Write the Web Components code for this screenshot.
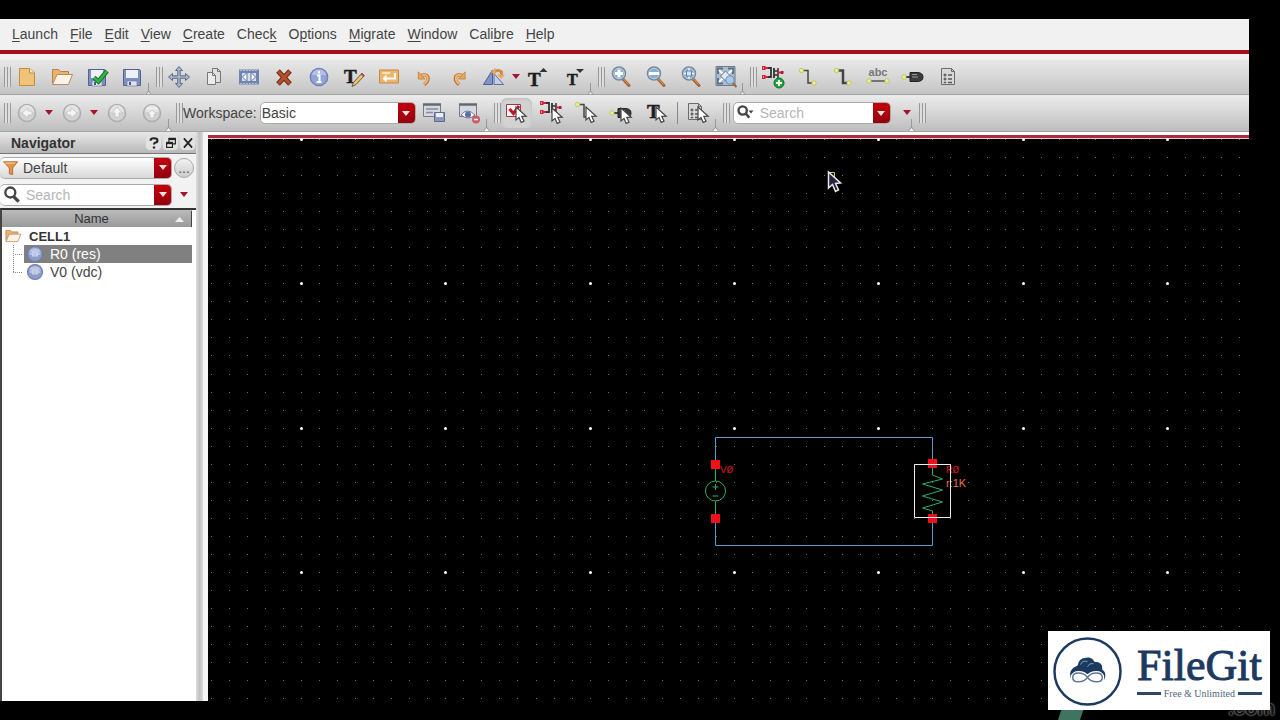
<!DOCTYPE html>
<html lang="en">
<head>
<meta charset="utf-8">
<title>Schematic Editor</title>
<style>
  html, body { margin: 0; background: #000; }
  body { font-family: "Liberation Sans", Arial, sans-serif; font-size: 14px; line-height: 18px; color: #333; }
</style>
</head>
<body>
<eda-app></eda-app>

<script>
// ---------- icon library (24 x 24 grid) ----------
const floppy = '<path d="M3.500 4.500h16l1 1v15h-17z" fill="#7e8fc4" stroke="#53618f"/><path d="M6 5h12v8H6z" fill="#eef1fa"/><path d="M7 16h10v5H7z" fill="#dfe2ec" stroke="#6672a0" stroke-width=".6"/><path d="M9 17h2v3H9z" fill="#4b5889"/>';
const cursor = '<path d="M0 0v13l3-2.600 2.200 5 2.800-1.200-2.200-4.800 4.400-.2z" fill="#fff" stroke="#444" stroke-width="1.200"/>';
const lens = '<path d="M14 14l6 6.500" stroke="#a9602c" stroke-width="3" stroke-linecap="round"/><path d="M14.500 14l5 5.500" stroke="#e0a060" stroke-width="1"/><circle cx="10" cy="8.500" r="6.500" fill="#86aed2" stroke="#7b8794" stroke-width="1.500"/><circle cx="10" cy="8.500" r="5.300" fill="none" stroke="#c6dcee" stroke-width=".8"/>';
const page = '<path d="M5.500 3.500h10l3 3v13h-13z" fill="#d8d8d8" stroke="#6b6b6b"/><path d="M15.500 3.500v3h3" fill="none" stroke="#6b6b6b"/><path d="M8 9h2v2H8zM8 13h2v2H8zM8 17h2v1H8z" stroke="#555" fill="#777" stroke-width=".6"/><path d="M12 10h4M12 14h4M12 17.500h4" stroke="#555" stroke-width="1.500"/>';
const folder = '<path d="M2.500 18V4.500h6l2 2h8V10" fill="#e9b271" stroke="#b9803f"/><path d="M2.500 19.500L7 9.500h15.500l-4 10z" fill="#f8f2e8" stroke="#b98a5a"/>';
const dot = (x, y) => `<circle cx="${x}" cy="${y}" r="2.200" fill="#eff08a" stroke="#b9bb55" stroke-width=".8"/>`;
const gate = '<path d="M3 12h7" stroke="#444" stroke-width="2"/>' + dot(3, 12) + '<path d="M9 7.500h7q6 0 6 4.500t-6 4.500H9z" fill="#3c3c3c" stroke="#222"/><path d="M11 12h6M11 9.500h5" stroke="#999" stroke-width="1.200"/>';
const mos = '<path d="M2 3h6M2 12h5" stroke="#cf2338" stroke-width="2"/><path d="M1 1h3.500v4H1zM1 10h3.500v4H1z" fill="#cf2338"/><path d="M2.500 2.500v1M2.500 11.500v1" stroke="#fff"/><path d="M7 3h3M7 12h3M10 2v11M13 3v10" fill="none" stroke="#333" stroke-width="1.800"/><path d="M13 6h4M13 10h4M17 3v10" stroke="#333" stroke-width="1.500"/><path d="M17 7.500h5" stroke="#cf2338" stroke-width="2"/><path d="M20 6h2.500v3H20z" fill="#b0182c"/>';
const round = '<circle cx="12" cy="12" r="8.500" fill="#d3d3d3" stroke="#acacac" stroke-width="1.500"/><path d="M5 11a7 7 0 0 1 14 0z" fill="#e4e4e4"/>';
const wire = c => `<path d="M6 5.500h6V18h6" fill="none" stroke="#444" stroke-width="${c}"/>` + dot(5.5, 5.5) + dot(18, 18);
const bigT = (x, y, s) => `<text x="${x}" y="${y}" font-family="Liberation Serif, serif" font-weight="700" font-size="${s}" fill="#1c1c1c" stroke="#1c1c1c" stroke-width=".5">T</text>`;

const ICONS = {
  new: '<path d="M4.500 3.500h10l5 4v13h-15z" fill="#f0c477" stroke="#bd8d48"/><path d="M14.500 3.500v4.500h5" fill="#fbe6bd" stroke="#bd8d48"/>',
  open: folder,
  checksave: floppy + '<path d="M9 12.500l4.500 4L22 6" fill="none" stroke="#16752a" stroke-width="4.500"/><path d="M9 12.500l4.500 4L22 6" fill="none" stroke="#35b449" stroke-width="2.500"/>',
  save: floppy,
  move: '<path d="M12 1.500l3.500 4h-2.300v5.300h5.300V8.500l4 3.500-4 3.500v-2.300h-5.300v5.300h2.300l-3.500 4-3.500-4h2.300v-5.300H5.500v2.300l-4-3.500 4-3.500v2.300h5.300V5.500H8.500z" fill="#a9b7cc" stroke="#5d6b83" stroke-width="1"/>',
  copy: '<path d="M10.500 3.500h5l3 3v11h-8z" fill="#e0e0e0" stroke="#777"/><path d="M5.500 7.500h5l3 3v9h-8z" fill="#ececec" stroke="#777"/><path d="M10.500 7.500v3h3M15.500 3.500v3h3" fill="none" stroke="#777"/>',
  stretch: '<path d="M2 4.500h20v15H2z" fill="#7184af"/><path d="M3 5.500h18M3 18.500h18" stroke="#aebbdb" stroke-dasharray="2 1"/><path d="M5 8h14v8H5z" fill="#d5ddf0"/><path d="M10 7.500v9L5.500 12zM14 7.500v9l4.500-4.500z" fill="#fff" stroke="#6073a3"/>',
  delete: '<path d="M6 6l12 13M18 6L6 19" stroke="#6f2c18" stroke-width="5"/><path d="M6.500 6.500l11 12M17.500 6.500l-11 12" stroke="#b3512f" stroke-width="3"/>',
  info: '<circle cx="12" cy="12" r="8.700" fill="#94a3d6" stroke="#6f7fb8" stroke-width="1.300"/><path d="M5 10a7.200 7.200 0 0 1 14 0z" fill="#b4bfe6"/><path d="M12 6v2.500M10 10.500h2.500V17M9.500 17h5" fill="none" stroke="#fff" stroke-width="2"/>',
  edittext: bigT(2, 18, 19) + '<path d="M10 21.500l1.500-4L20 8l2.500 2.500-8.500 9z" fill="#efc36e" stroke="#6f5a3a"/><path d="M18.500 9.500L20 8l2.500 2.500-1.500 1.500z" fill="#c05070"/>',
  repeat: '<path d="M2.500 5h19v13h-19z" fill="#f0b56c" stroke="#c68844"/><path d="M18 8v5.500H8" fill="none" stroke="#fff" stroke-width="2"/><path d="M9.500 9.500v8l-4-4z" fill="#fff"/><path d="M5 8h8" stroke="#fbe2bf" stroke-width="2"/>',
  undo: '<g transform="translate(2 3) scale(.85)"><path d="M6.500 9.500q10-4 10 3 0 3.500-4.500 7" fill="none" stroke="#bd7434" stroke-width="4"/><path d="M7 9.500q9-3.500 9 3 0 3-4 6.500" fill="none" stroke="#f2b873" stroke-width="2.200"/><path d="M5 4.500v8.500h8z" fill="#eaa75d" stroke="#bd7434" stroke-width=".8"/></g>',
  redo: '<g transform="translate(2 3) scale(.85)"><path d="M17.500 9.500q-10-4-10 3 0 3.500 4.500 7" fill="none" stroke="#bd7434" stroke-width="4"/><path d="M17 9.500q-9-3.500-9 3 0 3 4 6.500" fill="none" stroke="#f2b873" stroke-width="2.200"/><path d="M19 4.500v8.500h-8z" fill="#eaa75d" stroke="#bd7434" stroke-width=".8"/></g>',
  rotate: '<path d="M1.500 19.500L10.500 5v14.500z" fill="#8195c7" stroke="#4e6092"/><path d="M12 19.500V8.500l9.500 11z" fill="#c3cfea" stroke="#5d6f9f"/><path d="M12 7q4-3 7.500 0v4" fill="none" stroke="#d18a43" stroke-width="3"/><path d="M15 9.500h8l-4 4.500z" fill="#e9a65c"/><path d="M9 7l4.500-4.500v8z" fill="#e9a65c"/>',
  textup: bigT(1, 21, 19) + '<path d="M12.500 7l4-4 4 4z" fill="#333"/>',
  textdown: bigT(5, 20, 16) + '<path d="M14 4h8l-4 4z" fill="#333"/>',
  zoomin: lens + '<path d="M10 4.500v8M6 8.500h8" stroke="#fff" stroke-width="3"/>',
  zoomout: lens + '<path d="M5 8.500h10" stroke="#fff" stroke-width="3"/>',
  zoomsel: lens + '<path d="M10 3.500v10M5 8.500h10" stroke="#fff" stroke-width="1.500"/><path d="M7.500 6h5v5h-5z" fill="#d7e6f5" stroke="#5c86b8"/>',
  zoomfit: '<path d="M2 1.500h19v19H2z" fill="#aebccb" stroke="#6b7a8d"/><path d="M4 9V3.500h5M14 3.500h5V9M4 13v5.500h5" fill="none" stroke="#5c6f88" stroke-width="2"/><path d="M5 5l4 4M18 5l-4 4M5 17l4-4" stroke="#fff" stroke-width="2"/><path d="M11.500 6l5 5-5 5-5-5z" fill="#dde7f2" stroke="#5d7694"/><path d="M17.500 17l5 5" stroke="#a9602c" stroke-width="2"/><circle cx="16" cy="15" r="4.200" fill="#a9c9e8" stroke="#6d8aa8"/>',
  instance: mos + '<circle cx="18" cy="18" r="5" fill="#22a53c" stroke="#11702a"/><path d="M18 15v6M15 18h6" stroke="#fff" stroke-width="1.800"/>',
  wire: wire(1.5),
  widewire: wire(2.5),
  label: '<text x="12" y="11" text-anchor="middle" font-family="Liberation Sans, sans-serif" font-size="11" font-weight="700" fill="#777">abc</text><path d="M3 16h18" stroke="#555" stroke-width="1.500"/>' + dot(3, 16) + dot(21, 16),
  pin: gate,
  sheet: page,
  left: round + '<path d="M13 7v3h4v4h-4v3l-6-5z" fill="#f4f4f4" stroke="#bdbdbd" stroke-width=".7"/>',
  right: round + '<path d="M11 7v3H7v4h4v3l6-5z" fill="#f4f4f4" stroke="#bdbdbd" stroke-width=".7"/>',
  up: round + '<path d="M7 12h3v4h4v-4h3l-5-6z" fill="#f4f4f4" stroke="#bdbdbd" stroke-width=".7"/>',
  top: round + '<path d="M6.500 13h3.500v4h4v-4h3.500L12 9z" fill="#f4f4f4" stroke="#bdbdbd" stroke-width=".7"/><path d="M7 7.500h10" stroke="#f4f4f4" stroke-width="1.500"/>',
  savews: '<path d="M1.500 3.500h17v12h-17z" fill="#d6d9de" stroke="#757b85"/><path d="M1 3.500h18" stroke="#626975" stroke-width="2.500"/><path d="M4 8h12M4 11.500h7" stroke="#878d98" stroke-width="1.500"/><path d="M12.500 11.500h10v9h-10z" fill="#8b99bd" stroke="#5e6a8e"/><path d="M14 12h7v4h-7z" fill="#eef1f8"/>',
  hidews: '<path d="M2.500 3.500h17v12h-17z" fill="#d6d9de" stroke="#757b85"/><path d="M2 3.500h18" stroke="#626975" stroke-width="2.500"/><path d="M4 14q6-8 14 0-7 6-14 0z" fill="#fff" stroke="#6a79a1"/><circle cx="11" cy="13.500" r="3" fill="#5a6fa8"/><circle cx="19" cy="18.500" r="4" fill="#d05a66"/><path d="M17 18.500h4" stroke="#fff" stroke-width="1.500"/>',
  selall: '<path d="M2.500 3.500h14v12h-14z" fill="#fff" stroke="#b03040"/><path d="M5.500 8l4 4.500L15 5" fill="none" stroke="#cc1024" stroke-width="3"/><g transform="translate(12 6)">' + cursor + '</g>',
  selinst: '<g transform="translate(0 -1)">' + mos + '</g><g transform="translate(13 7)">' + cursor + '</g>',
  selwire: '<g transform="translate(-2 -2)">' + wire(1.5) + '</g><g transform="translate(12 6)">' + cursor + '</g>',
  selpin: gate + '<g transform="translate(12 7)">' + cursor + '</g>',
  seltext: bigT(3, 17, 19) + '<g transform="translate(12 6)">' + cursor + '</g>',
  selsheet: '<g transform="translate(-3 -1)">' + page + '</g><g transform="translate(12 6)">' + cursor + '</g>',
  search: '<path d="M14 14l6 6" stroke="#444" stroke-width="4"/><circle cx="10" cy="9" r="6" fill="#fff" stroke="#444" stroke-width="2.800"/>',
  searchmenu: '<path d="M11 12l5 5.500" stroke="#444" stroke-width="3"/><circle cx="8" cy="9" r="5" fill="#fff" stroke="#444" stroke-width="2.800"/><path d="M15 9h6l-3 3.500z" fill="#444"/>',
  filter: '<path d="M3 4.500h17l-6 7.500v8l-4-1v-7z" fill="#e39249" stroke="#a9652d"/><path d="M5 6h12" stroke="#f6c590" stroke-width="1.500"/>',
  folder: folder,
  instnode: '<circle cx="12" cy="12" r="10" fill="#8d9cc9" stroke="#6d7cab" stroke-width="1.500"/><path d="M4 10a8.500 8.500 0 0 1 16 0z" fill="#bcc6e4"/><path d="M5 12h14M9 9.500h6v5H9z" fill="none" stroke="#ccd4ec" stroke-width="1.800"/>',
  help: '<path d="M6 8q0-4 6-4t6 4q0 2.500-4 3.500-2 1-2 3" fill="none" stroke="#222" stroke-width="3.500"/><path d="M10 18h4v3.500h-4z" fill="#222"/>',
  float: '<path d="M8.500 4.500h11v9h-11z" fill="none" stroke="#222" stroke-width="2"/><path d="M8 5h12" stroke="#222" stroke-width="4"/><path d="M4.500 11.500h10v8h-10z" fill="#eee" stroke="#222" stroke-width="2"/><path d="M4 12h11" stroke="#222" stroke-width="4"/>',
  close: '<path d="M5 4l14 16M19 4L5 20" stroke="#222" stroke-width="3"/>'
};

const define = (name, html, setup) => {
  const template = document.createElement('template');
  template.innerHTML = html;
  customElements.define(name, class extends HTMLElement {
    connectedCallback() {
      if (this.shadowRoot) return;
      const root = this.attachShadow({ mode: 'open' });
      root.append(template.content.cloneNode(true));
      if (setup) setup(this, root);
    }
  });
};

// ---------- small parts ----------
define('eda-icon', `
<style>
  :host { display: block; width: 24px; height: 24px; flex: none; }
  svg { display: block; width: 100%; height: 100%; overflow: visible; }
</style><svg viewBox="0 0 24 24" fill="none" aria-hidden="true"></svg>`,
(host, root) => { root.querySelector('svg').innerHTML = ICONS[host.getAttribute('name')] || ''; });

define('tool-button', `
<style>
  :host { display: block; width: 35px; flex: none; }
  button { display: grid; place-items: center; width: 31px; height: 30px; margin: 0 auto; padding: 0; border: 0; border-radius: 6px; background: none; }
  button[aria-pressed="true"] { background: #d2d2d2; box-shadow: inset 0 1px 3px #bbb; }
</style><button type="button"><eda-icon></eda-icon></button>`,
(host, root) => {
  const button = root.querySelector('button');
  button.setAttribute('aria-label', host.getAttribute('label'));
  if (host.hasAttribute('pressed')) button.setAttribute('aria-pressed', 'true');
  const icon = document.createElement('eda-icon');
  icon.setAttribute('name', host.getAttribute('icon'));
  root.querySelector('eda-icon').replaceWith(icon);
});

define('menu-arrow', `
<style>
  :host { display: block; width: 10px; flex: none; }
  button { display: grid; place-items: center; width: 100%; height: 22px; padding: 0; border: 0; background: none; }
  svg { display: block; }
</style><button type="button" aria-label="More"><svg width="8" height="6" viewBox="0 0 8 6"><path d="M0 0h8L4 5z" fill="#a3152c"/></svg></button>`);

define('tool-group', `
<style>
  :host { display: flex; align-items: center; position: relative; flex: none; min-height: 30px; }
  .grip { width: 14px; height: 20px; margin-right: -2px; flex: none;
    background: repeating-linear-gradient(90deg, #999 0 1px, #dedede 1px 3px) right / 7px 100% no-repeat; }
  :host([first]) .grip { width: 11px; }
  .notch { position: absolute; right: -3px; bottom: -3px; }
  :host([last]) .notch { display: none; }
</style><span class="grip"></span><slot></slot><svg class="notch" width="7" height="12" aria-hidden="true"><path d="M3 0h1v8l3 4H0l3-4z" fill="#999"/><path d="M1 12l2.500-3L6 12z" fill="#f4f4f4"/></svg>`);

define('combo-box', `
<style>
  :host { display: flex; height: 22px; min-width: 0; box-sizing: border-box; border: 1px solid #aaa; border-radius: 5px; overflow: hidden;
    background: var(--face, #fff); align-items: center; }
  select, input { flex: 1; min-width: 0; height: 20px; border: 0; padding: 0 0 0 1px; margin: 0; background: none; font: inherit; color: #444; appearance: none; outline: 0; }
  input::placeholder { color: #b5b5b5; opacity: 1; }
  .drop { display: grid; place-items: center; flex: none; width: 17px; height: 100%; padding: 0; border: 0; background: linear-gradient(#c4000c, #930010); pointer-events: none; }
  eda-icon { width: 20px; height: 20px; margin: 0 1px; }
  :host([wide-icon]) eda-icon { margin: 0 3px 0 2px; }
</style><slot></slot><span class="field"></span><span class="drop"><svg width="8" height="5"><path d="M0 0h8L4 5z" fill="#fbe0e0"/></svg></span>`,
(host, root) => {
  const field = document.createElement(host.hasAttribute('search') ? 'input' : 'select');
  field.setAttribute('aria-label', host.getAttribute('label'));
  if (host.hasAttribute('search')) field.placeholder = 'Search';
  else field.append(new Option(host.getAttribute('value')));
  root.querySelector('.field').replaceWith(field);
  const name = host.getAttribute('icon');
  if (name) {
    const icon = document.createElement('eda-icon');
    icon.setAttribute('name', name);
    root.prepend(icon);
  }
});

// ---------- menu bar ----------
define('menu-bar', `
<style>
  :host { display: block; background: #f1f1f1; border-bottom: 4px solid #a80f1d; }
  nav { display: flex; gap: 12px; padding: 6px 12px 7px; }
  a { color: #444; text-decoration: none; }
  u { text-underline-offset: 2px; }
</style>
<nav>
  <a href="#"><u>L</u>aunch</a><a href="#"><u>F</u>ile</a><a href="#"><u>E</u>dit</a><a href="#"><u>V</u>iew</a><a href="#"><u>C</u>reate</a><a href="#">Chec<u>k</u></a><a href="#">O<u>p</u>tions</a><a href="#"><u>M</u>igrate</a><a href="#"><u>W</u>indow</a><a href="#">Cali<u>b</u>re</a><a href="#"><u>H</u>elp</a>
</nav>`);

// ---------- tool bars ----------
define('tool-bars', `
<style>
  :host { display: block; }
  .row { display: flex; align-items: center; height: 36px; overflow: hidden; border-bottom: 1px solid #a2a2a2; background: linear-gradient(#ececec, #dadada 40%, #bebebe); }
  .row.upper { height: 35px; padding-top: 5px; background: linear-gradient(#f5f0f2 5px, #e6e6e6 7px, #dadada 50%, #c4c4c4); }
  label { padding: 0 3px 0 2px; color: #444; }
  .workspace { width: 156px; margin-right: 1px; }
  .find { width: 158px; margin: 0 11px 0 5px; }
  .rule { width: 1px; height: 22px; margin: 0 3px; background: #888; }
</style>
<div class="row upper">
  <tool-group first>
    <tool-button icon="new" label="New"></tool-button><tool-button icon="open" label="Open"></tool-button><tool-button icon="checksave" label="Check and save"></tool-button><tool-button icon="save" label="Save"></tool-button>
  </tool-group>
  <tool-group>
    <tool-button icon="move" label="Move"></tool-button><tool-button icon="copy" label="Copy"></tool-button><tool-button icon="stretch" label="Stretch"></tool-button><tool-button icon="delete" label="Delete"></tool-button><tool-button icon="info" label="Properties"></tool-button><tool-button icon="edittext" label="Edit text"></tool-button><tool-button icon="repeat" label="Repeat"></tool-button><tool-button icon="undo" label="Undo"></tool-button><tool-button icon="redo" label="Redo"></tool-button><tool-button icon="rotate" label="Rotate"></tool-button><menu-arrow></menu-arrow><tool-button icon="textup" label="Larger text"></tool-button><tool-button icon="textdown" label="Smaller text"></tool-button>
  </tool-group>
  <tool-group>
    <tool-button icon="zoomin" label="Zoom in"></tool-button><tool-button icon="zoomout" label="Zoom out"></tool-button><tool-button icon="zoomsel" label="Zoom to selection"></tool-button><tool-button icon="zoomfit" label="Zoom to fit"></tool-button>
  </tool-group>
  <tool-group last>
    <tool-button icon="instance" label="Instance"></tool-button><tool-button icon="wire" label="Wire"></tool-button><tool-button icon="widewire" label="Wide wire"></tool-button><tool-button icon="label" label="Wire name"></tool-button><tool-button icon="pin" label="Pin"></tool-button><tool-button icon="sheet" label="Sheet"></tool-button>
  </tool-group>
</div>
<div class="row">
  <tool-group first>
    <tool-button icon="left" label="Back"></tool-button><menu-arrow></menu-arrow><tool-button icon="right" label="Forward"></tool-button><menu-arrow></menu-arrow><tool-button icon="up" label="Up"></tool-button><tool-button icon="top" label="Top"></tool-button>
  </tool-group>
  <tool-group>
    <label>Workspace:</label><combo-box class="workspace" label="Workspace" value="Basic"></combo-box><tool-button icon="savews" label="Save workspace"></tool-button><tool-button icon="hidews" label="Toggle assistants"></tool-button>
  </tool-group>
  <tool-group>
    <tool-button icon="selall" label="Select all kinds" pressed></tool-button><tool-button icon="selinst" label="Select instances"></tool-button><tool-button icon="selwire" label="Select wires"></tool-button><tool-button icon="selpin" label="Select pins"></tool-button><tool-button icon="seltext" label="Select text"></tool-button><span class="rule"></span><tool-button icon="selsheet" label="Select sheet"></tool-button>
  </tool-group>
  <tool-group>
    <combo-box class="find" search wide-icon icon="searchmenu" label="Search"></combo-box><menu-arrow></menu-arrow>
  </tool-group>
  <tool-group last></tool-group>
</div>`);

// ---------- navigator ----------
define('navigator-panel', `
<style>
  :host { display: flex; flex-direction: column; width: 196px; flex: none; background: #f2f2f2; }
  header { display: flex; align-items: center; height: 21px; gap: 2px; padding: 0 1px 0 11px; border-bottom: 1px solid #777; background: linear-gradient(#e8e8e8, #b8b8b8); }
  h2 { flex: 1; margin: 0; font-size: 14px; line-height: 18px; color: #333; }
  header button { display: grid; place-items: center; width: 15px; height: 15px; padding: 0; border: 0; border-radius: 4px; background: #e2e2e2; }
  header eda-icon { width: 14px; height: 14px; }
  .line { display: flex; align-items: center; height: 27px; }
  .line combo-box { width: 172px; border-left: 0; }
  .filter { --face: linear-gradient(#fff, #d8d8d8); }
  .more { width: 20px; height: 20px; margin-left: 2px; padding: 0; border: 1px solid #aaa; border-radius: 50%; background: linear-gradient(#f2f2f2, #ccc); font: inherit; line-height: 14px; color: #555; }
  .line menu-arrow { margin-left: 7px; }
  .tree { flex: 1; background: #fff; border-top: 2px solid #333; border-left: 2px solid #444; padding-right: 4px; }
  table { width: 100%; border-collapse: collapse; }
  th, td { padding: 0; height: 18px; line-height: 17px; text-align: left; }
  th { height: 17px; line-height: 16px; background: linear-gradient(#bbb, #999); font-weight: 400; font-size: 13px; color: #333; }
  .head { display: flex; align-items: center; justify-content: center; position: relative; padding-right: 10px; border-right: 1px solid #444; }
  .head svg { position: absolute; right: 7px; top: 6px; }
  .cell { display: flex; align-items: center; height: 18px; }
  .cell.root { gap: 7px; font-weight: 700; font-size: 13px; padding-left: 2px; }
  .cell eda-icon { width: 18px; height: 18px; }
  .branch { flex: none; width: 10px; height: 18px; margin-left: 11px; 
    background: repeating-linear-gradient(#888 0 1px, #fff 1px 2px) 0 0 / 1px var(--stem) no-repeat, repeating-linear-gradient(90deg, #888 0 1px, #fff 1px 2px) 0 9px / 100% 1px no-repeat; }
  .item { flex: 1; display: flex; align-items: center; gap: 6px; height: 18px; margin-left: 1px; padding-left: 2px; color: #444; }
  tr[aria-selected="true"] .item { background: #808080; color: #fff; }
</style>
<header><h2>Navigator</h2><button type="button" aria-label="Help"><eda-icon name="help"></eda-icon></button><button type="button" aria-label="Float"><eda-icon name="float"></eda-icon></button><button type="button" aria-label="Close"><eda-icon name="close"></eda-icon></button></header>
<div class="line"><combo-box class="filter" icon="filter" label="Filter" value="Default"></combo-box><button class="more" type="button" aria-label="Edit filter">...</button></div>
<div class="line"><combo-box search wide-icon icon="search" label="Search navigator"></combo-box><menu-arrow></menu-arrow></div>
<div class="tree">
<table>
  <thead><tr><th scope="col"><div class="head">Name<svg width="9" height="5"><path d="M0 5h9L4.500 0z" fill="#eee"/></svg></div></th></tr></thead>
  <tbody>
    <tr><td><div class="cell root"><eda-icon name="folder"></eda-icon>CELL1</div></td></tr>
    <tr aria-selected="true"><td><div class="cell"><span class="branch" style="--stem:18px"></span><div class="item"><eda-icon name="instnode"></eda-icon>R0 (res)</div></div></td></tr>
    <tr><td><div class="cell"><span class="branch" style="--stem:9px"></span><div class="item"><eda-icon name="instnode"></eda-icon>V0 (vdc)</div></div></td></tr>
  </tbody>
</table>
</div>`);

// ---------- schematic canvas ----------
define('schematic-canvas', `
<style>
  :host { display: flex; flex-direction: column; flex: 1; min-width: 0; background: #fff; padding-top: 3px; }
  .sheet { flex: 1; min-height: 0; position: relative; overflow: hidden; background: #000; border-top: 3px solid #a2303f; }
  .sheet::before { content: ""; display: block; height: 1px; background: #f0c8cc; }
  svg { position: absolute; inset: 0; width: 100%; height: 100%; }
  text { font-family: "Liberation Sans", Arial, sans-serif; font-size: 11px; }
  .ref { font-family: "Liberation Mono", monospace; }
</style>
<div class="sheet"><svg role="img" aria-label="Schematic of CELL1">
  <path class="minor" fill="#707070"/>
  <g class="major" fill="#fff"></g>
  <g fill="none" stroke="#5b9bd0" stroke-width="1"><path d="M507.500 322V299.500h217V322M507.500 384v23.500h217V384"/></g>
  <g fill="none" stroke="#2fae63" stroke-width="1">
    <path d="M507.500 330v13M507.500 363v14M724.500 330v7l10 4-20 5 20 6-20 6 20 6-20 6 10 3v6"/>
    <circle cx="507.500" cy="353" r="10"/><path d="M507.500 346v6M504.500 349h6M504.500 358h6"/>
  </g>
  <text class="ref" x="512" y="335" fill="#d01822">VØ</text>
  <text class="ref" x="738" y="335" fill="#d01822">RØ</text>
  <text x="738" y="349" fill="#e0704a">r:1K</text>
  <g fill="#f0101c"><path d="M503 322h9v9h-9zM503 376h9v9h-9zM720 321h9v9h-9zM720 376h9v9h-9z"/></g>
  <path d="M706.500 326.500h36v53h-36z" fill="none" stroke="#eee"/>
  <path d="M620.500 34.500h6v6h-6z" fill="none" stroke="#d8d040"/>
  <path d="M620.500 34v16l4-3.500 3 7 3-1.500-3-6.500 5-.5z" fill="#23233f" stroke="#e8e8e8" stroke-width="1.500"/>
</svg></div>`,
(host, root) => {
  const pitch = 18.04, columns = 140, rows = 80;
  let minor = '', major = '';
  for (let j = 0; j < rows; j++) for (let i = 0; i < columns; i++) {
    const x = Math.round(2.8 + i * pitch), y = Math.round(1 + j * pitch);
    if (i % 8 === 5 && j % 8 === 0) major += `<circle cx="${x + .5}" cy="${y + .5}" r="1.500"/>`;
    else minor += `M${x} ${y}h1v1h-1z`;
  }
  root.querySelector('.minor').setAttribute('d', minor);
  root.querySelector('.major').innerHTML = major;
});

// ---------- watermark ----------
define('file-badge', `
<style>
  :host { display: block; position: absolute; right: 0; bottom: 0; width: 232px; height: 89px; overflow: hidden; }
  .shape { position: absolute; left: 10px; bottom: 0; }
  .site { position: absolute; right: 5px; bottom: 0; font-size: 20px; line-height: 24px; font-weight: 700; color: #111; text-shadow: 0 0 2px #999, 0 0 2px #999; }
  .card { position: absolute; right: 10px; bottom: 10px; display: flex; align-items: center; gap: 15px; width: 222px; height: 79px; box-sizing: border-box; padding: 2px 9px 0 5px; background: #fff; color: #1c3a5f; font-family: "Liberation Serif", serif; }
  .card svg { flex: none; }
  .words { flex: 1; display: flex; flex-direction: column; align-items: stretch; }
  .name { font-size: 44px; line-height: 44px; -webkit-text-stroke: 1px #1c3a5f; }
  .tag { display: flex; align-items: center; gap: 3px; font-size: 10px; line-height: 12px; white-space: nowrap; color: #51647c; }
  .tag::before, .tag::after { content: ""; flex: 1; height: 3px; background: #2b4869; }
</style>
<svg class="shape" width="26" height="12"><path d="M4 0h22l-4 12H0z" fill="#3f7560"/></svg>
<span class="site">.com</span>
<div class="card">
  <svg width="69" height="69" viewBox="0 0 70 70">
    <circle cx="35" cy="35" r="33.500" fill="none" stroke="#1c3a5f" stroke-width="2.500"/>
    <path d="M18 42q-3-9 7-13 1-8 9-8 5-1 8 4 9 0 8 8 5 4 2 10z" fill="#1c3a5f"/>
    <path d="M28 28q2-5 7-3M35 30q2-4 6-3" fill="none" stroke="#8fa2b8"/>
    <path d="M35 41c-4-6-15-6-15 0s11 6 15 0c4-6 15-6 15 0s-11 6-15 0z" fill="#fff" stroke="#fff" stroke-width="4"/>
    <path d="M35 41c-4-6-15-6-15 0s11 6 15 0c4-6 15-6 15 0s-11 6-15 0z" fill="#fff" stroke="#5f7896" stroke-width="1.500"/>
  </svg>
  <div class="words"><span class="name">FileGit</span><span class="tag">Free &amp; Unlimited</span></div>
</div>`);

// ---------- application ----------
define('eda-app', `
<style>
  :host { display: flex; flex-direction: column; position: relative; box-sizing: border-box; min-height: 100vh; padding: 19px 31px 19px 0; background: #000; }
  main { flex: 1; display: flex; min-height: 0; }
  .splitter { flex: none; width: 7px; border-right: 5px solid #f6f6f6; background: linear-gradient(90deg, #ddd, #c2c2c2 50%, #d8d8d8); }
</style>
<menu-bar></menu-bar>
<tool-bars></tool-bars>
<main>
  <navigator-panel></navigator-panel>
  <div class="splitter"></div>
  <schematic-canvas></schematic-canvas>
</main>
<file-badge></file-badge>`);
</script>
</body>
</html>
